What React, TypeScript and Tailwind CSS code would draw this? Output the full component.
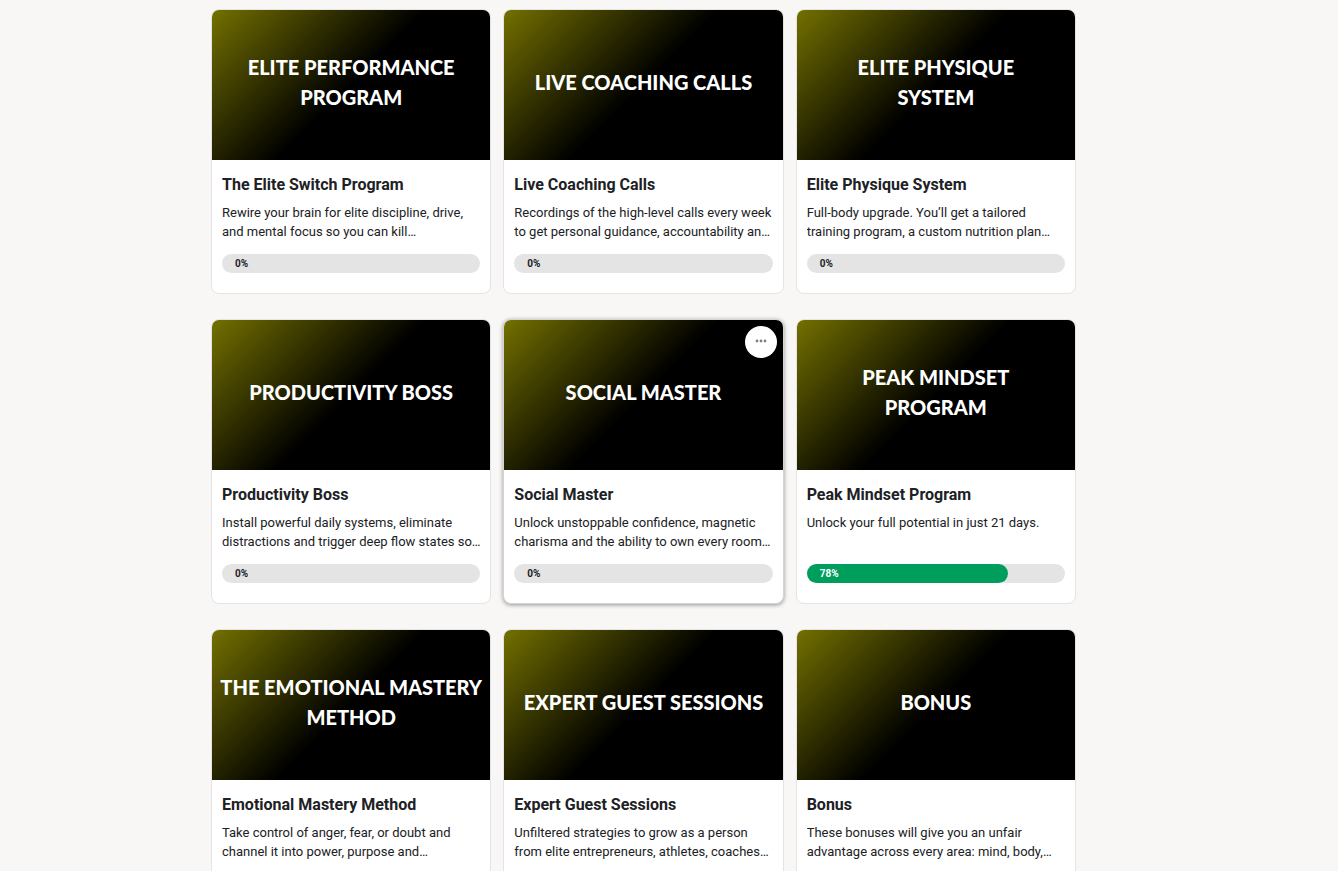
type Course = {
  id: number;
  cover: string[];
  title: string;
  description: string;
  progress: number;
  active?: boolean;
};

const courses: Course[] = [
  {
    id: 1,
    cover: ["Elite Performance", "Program"],
    title: "The Elite Switch Program",
    description: "Rewire your brain for elite discipline, drive, and mental focus so you can kill…",
    progress: 0,
  },
  {
    id: 2,
    cover: ["Live Coaching Calls"],
    title: "Live Coaching Calls",
    description: "Recordings of the high-level calls every week to get personal guidance, accountability an…",
    progress: 0,
  },
  {
    id: 3,
    cover: ["Elite Physique", "System"],
    title: "Elite Physique System",
    description: "Full-body upgrade. You’ll get a tailored training program, a custom nutrition plan…",
    progress: 0,
  },
  {
    id: 4,
    cover: ["Productivity Boss"],
    title: "Productivity Boss",
    description: "Install powerful daily systems, eliminate distractions and trigger deep flow states so…",
    progress: 0,
  },
  {
    id: 5,
    cover: ["Social Master"],
    title: "Social Master",
    description: "Unlock unstoppable confidence, magnetic charisma and the ability to own every room…",
    progress: 0,
    active: true,
  },
  {
    id: 6,
    cover: ["Peak Mindset", "Program"],
    title: "Peak Mindset Program",
    description: "Unlock your full potential in just 21 days.",
    progress: 78,
  },
  {
    id: 7,
    cover: ["The Emotional Mastery", "Method"],
    title: "Emotional Mastery Method",
    description: "Take control of anger, fear, or doubt and channel it into power, purpose and…",
    progress: 0,
  },
  {
    id: 8,
    cover: ["Expert Guest Sessions"],
    title: "Expert Guest Sessions",
    description: "Unfiltered strategies to grow as a person from elite entrepreneurs, athletes, coaches…",
    progress: 0,
  },
  {
    id: 9,
    cover: ["Bonus"],
    title: "Bonus",
    description: "These bonuses will give you an unfair advantage across every area: mind, body,…",
    progress: 0,
  },
];

function ProgressBar({ value, label }: { value: number; label: string }) {
  return (
    <div
      role="progressbar"
      aria-label={label}
      aria-valuenow={value}
      aria-valuemin={0}
      aria-valuemax={100}
      className="mt-[13px] h-[19px] rounded-full bg-[#e4e4e4]"
    >
      <div
        className={`h-full rounded-full pl-[13px] text-[10px] leading-[19px] font-bold ${
          value > 0 ? "bg-[#009e5d] text-white" : "text-[#202124]"
        }`}
        style={{ width: `${value}%` }}
      >
        {value}%
      </div>
    </div>
  );
}

function CourseCard({ course }: { course: Course }) {
  return (
    <article
      className={`relative overflow-hidden rounded-lg border bg-white ${
        course.active ? "border-[#d4d4d4] shadow-[0_1px_4px_rgba(0,0,0,0.4)]" : "border-[#e4e4e4]"
      }`}
    >
      <div className="flex h-[150px] flex-col items-center justify-center bg-[linear-gradient(135deg,#737000_0%,#000_50%)] pb-1.5 font-['Lato',sans-serif] text-xl leading-[30px] font-black whitespace-nowrap text-white uppercase">
        {course.cover.map((line) => (
          <span key={line}>{line}</span>
        ))}
      </div>
      {course.active && (
        <button
          type="button"
          aria-label="Course options"
          className="absolute top-1.5 right-1.5 flex size-8 items-center justify-center rounded-full bg-white pb-0.5 text-[#808080]"
        >
          <svg viewBox="0 0 12 4" className="h-1 w-3" fill="currentColor">
            <circle cx="2" cy="2" r="1.4" />
            <circle cx="6" cy="2" r="1.4" />
            <circle cx="10" cy="2" r="1.4" />
          </svg>
        </button>
      )}
      <div className="px-[10px] pt-[13px] pb-5">
        <h2 className="truncate text-base leading-6 font-bold">
          <a href="#">{course.title}</a>
        </h2>
        <p className="-mr-1 mt-[6px] line-clamp-2 h-[38px] text-[13px] leading-[19px]">{course.description}</p>
        <ProgressBar value={course.progress} label={`${course.title} progress`} />
      </div>
    </article>
  );
}

export default function App() {
  return (
    <main className="min-h-screen bg-[#f8f7f5] pt-[9px] pr-[51px] pb-6 font-['Roboto',sans-serif] text-[#202124]">
      <div className="mx-auto grid max-w-[865px] grid-cols-3 gap-x-3 gap-y-[25px]">
        {courses.map((course) => (
          <CourseCard key={course.id} course={course} />
        ))}
      </div>
    </main>
  );
}
